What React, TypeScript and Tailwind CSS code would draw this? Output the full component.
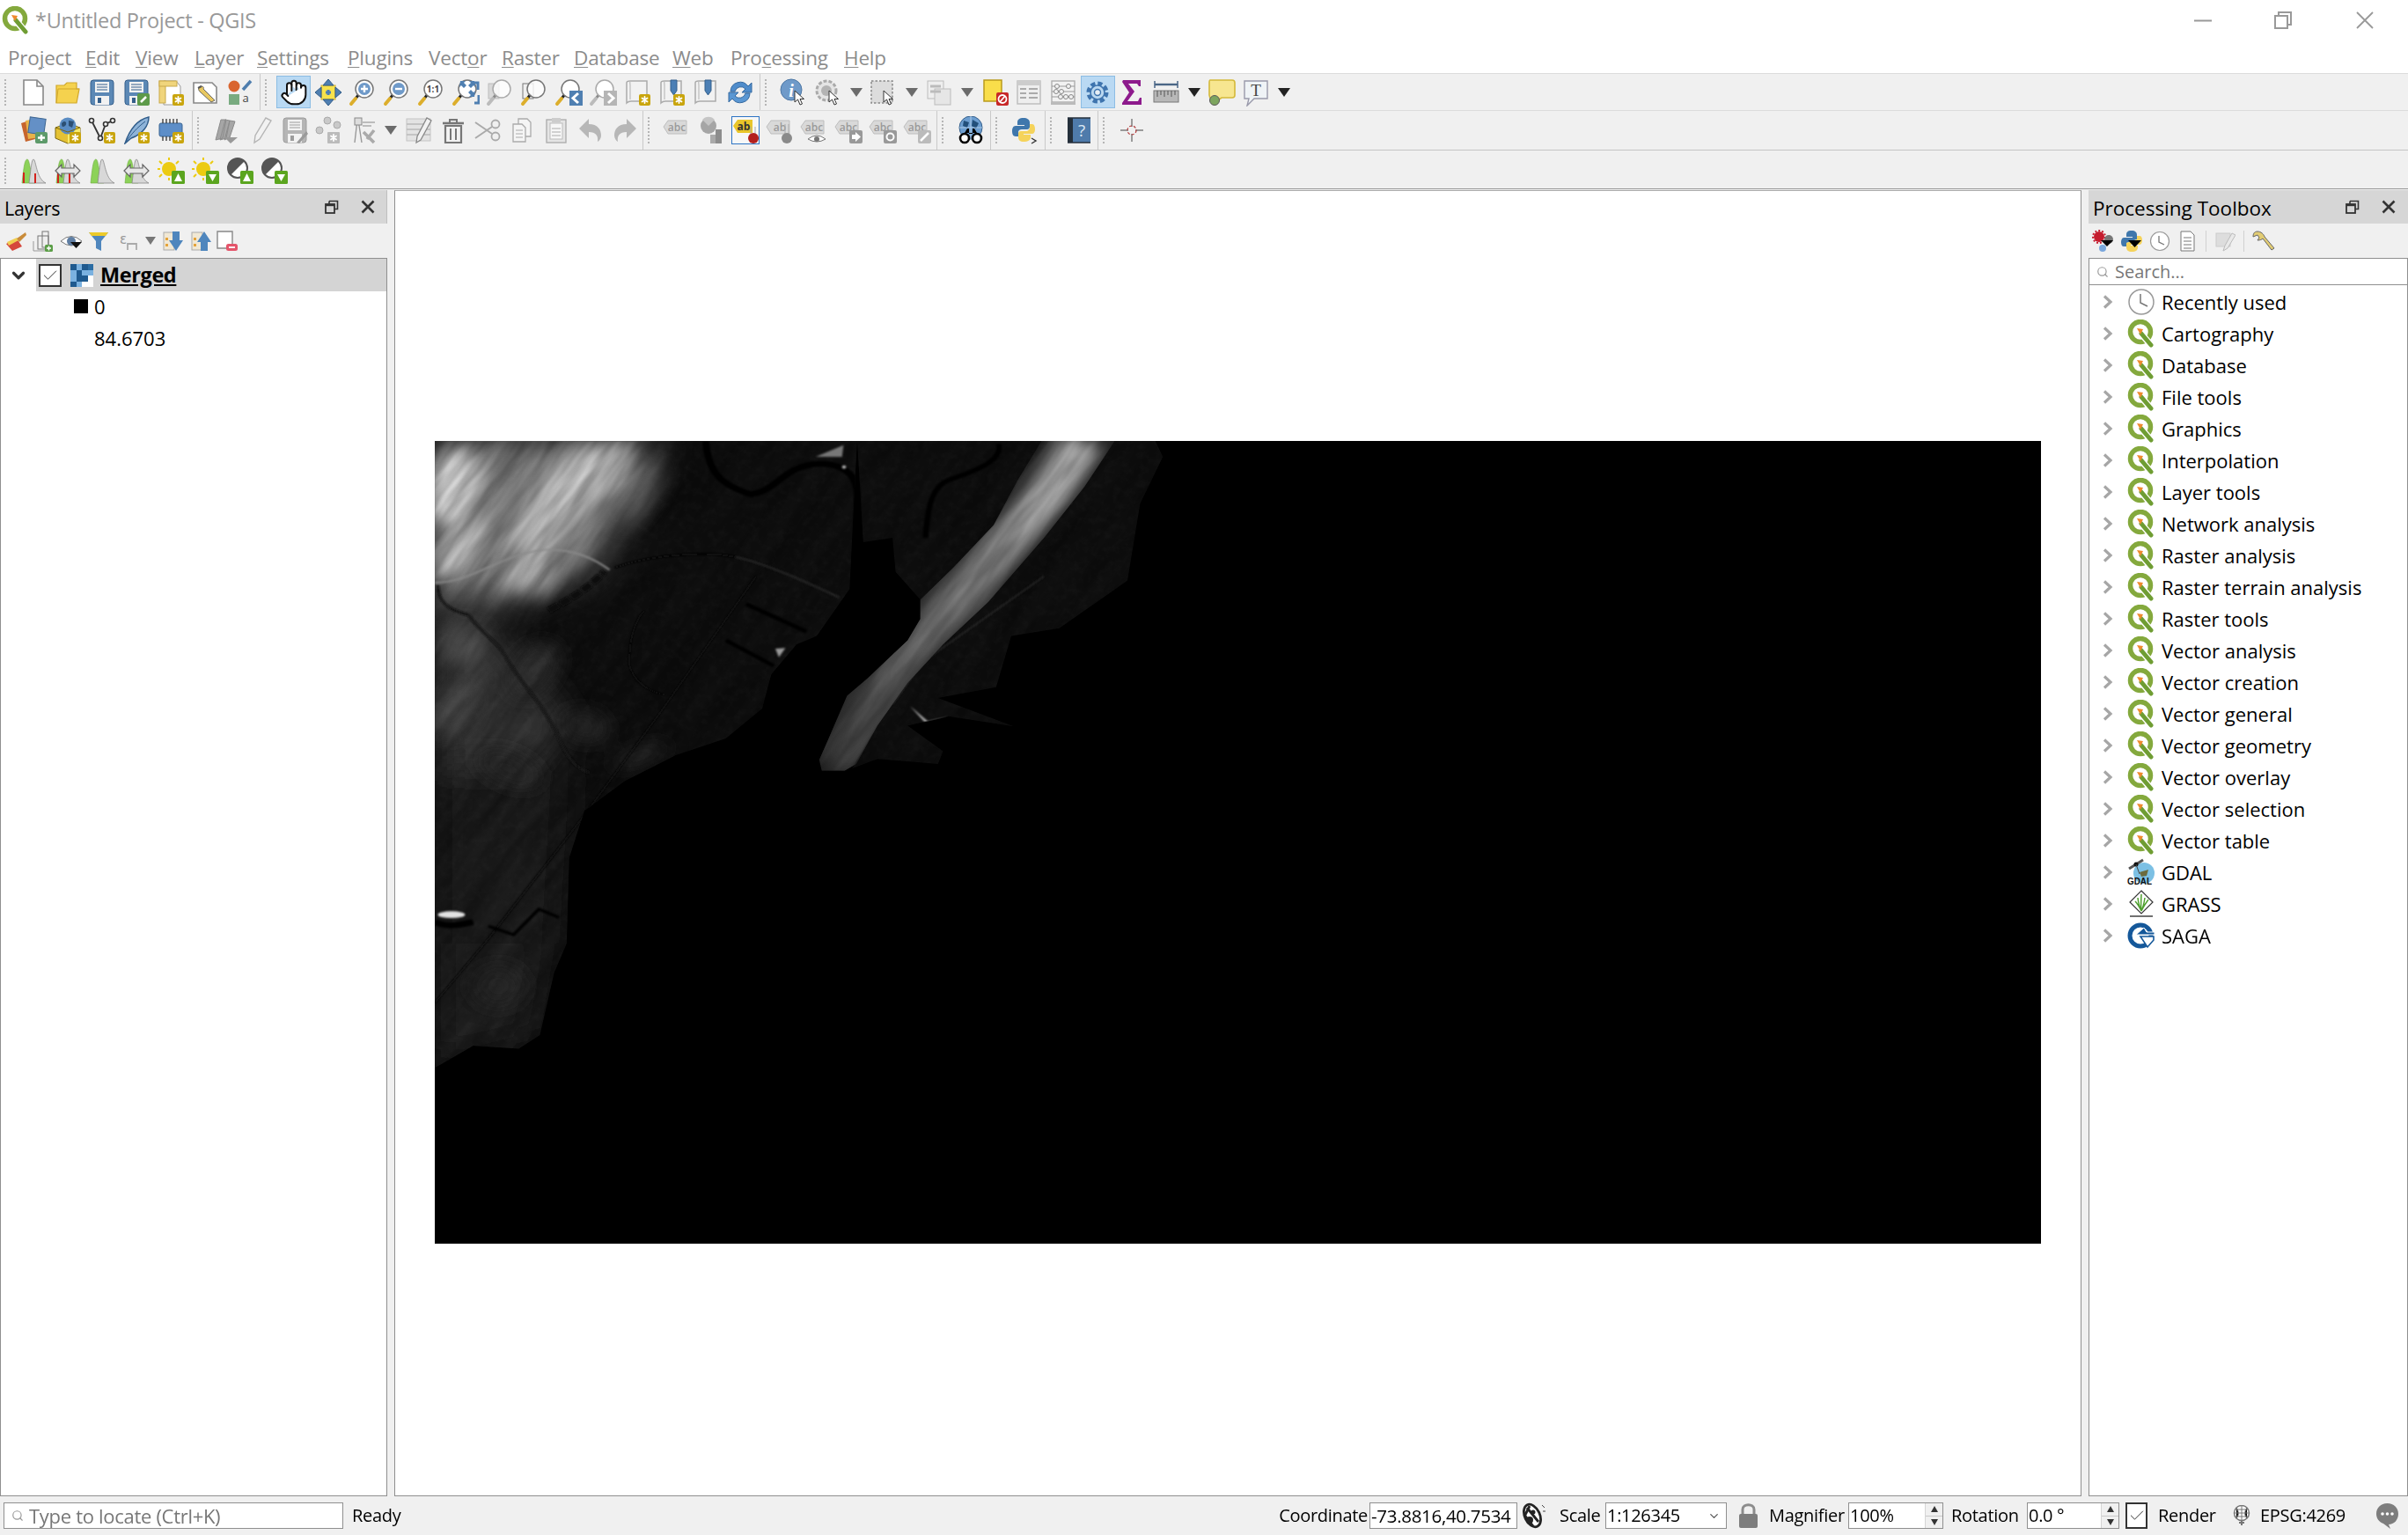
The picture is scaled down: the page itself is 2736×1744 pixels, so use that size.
import React from "react";
import { ChevronDown, Hand, Search, Check } from "lucide-react";

type P = { children?: React.ReactNode; s?: number };
const S = ({ children, s = 32 }: P) => (
  <svg viewBox="0 0 32 32" width={s} height={s} className="block shrink-0">{children}</svg>
);

const Star = ({ x, y, c = "#fff" }: { x: number; y: number; c?: string }) => (
  <g stroke={c} strokeWidth="1.8" strokeLinecap="round">
    <path d={`M${x} ${y - 3.5}V${y + 3.5}M${x - 3} ${y - 2}L${x + 3} ${y + 2}M${x - 3} ${y + 2}L${x + 3} ${y - 2}`} />
  </g>
);
const GoldBadge = () => (
  <g><rect x="18" y="18" width="13" height="13" rx="2" fill="#c9a50d" /><Star x={24.5} y={24.5} /></g>
);
const Cursor = ({ x = 17, y = 14 }: { x?: number; y?: number }) => (
  <path transform={`translate(${x} ${y})`} d="M0 0L0 13L3.5 10L6 16L8.5 15L6 9.5L10.5 9.5Z" fill="#fff" stroke="#333" strokeWidth="1" />
);
const Mag = ({ children, glass = "#fff", dim = false }: P & { glass?: string; dim?: boolean }) => (
  <>
    <path d="M12 18L8 23" stroke={dim ? "#888" : "#222"} strokeWidth="3" />
    <path d="M8 23L3 29" stroke={dim ? "#bbb" : "#dcae2c"} strokeWidth="4" strokeLinecap="round" />
    <circle cx="18" cy="12" r="10" fill={glass} stroke={dim ? "#aaa" : "#777"} strokeWidth="1.5" />
    {children}
  </>
);
const Abc = ({ t = "abc", c = "#9a9a9a", bg = "#d9d9d9" }: { t?: string; c?: string; bg?: string }) => (
  <>
    <path d="M1 12L6 5H27V20H6Z" fill={bg} stroke="#bdbdbd" strokeWidth="1" />
    <text x="16" y="17" textAnchor="middle" fontSize="12" fontFamily="Open Sans, sans-serif" fill={c} fontWeight="600">{t}</text>
  </>
);
const Scroll = ({ pin }: { pin?: boolean }) => (
  <>
    <path d="M4 5C4 3 6 3 8 3H27V26H9C6 26 4 28 4 28Z" fill="#f2f2f2" stroke="#aaa" strokeWidth="1.5" />
    <path d="M9 3C7 3 8 6 8 8V24" fill="none" stroke="#bbb" strokeWidth="1.2" />
    {pin && <path d="M15 2H22V14L18.5 19L15 14Z" fill="#4b7fb5" stroke="#35618c" />}
  </>
);
const Floppy = ({ c = "#5b88b5", d = "#355f8b" }: { c?: string; d?: string }) => (
  <>
    <rect x="3" y="2" width="26" height="28" rx="3" fill={c} stroke={d} strokeWidth="1" />
    <rect x="8" y="4" width="16" height="12" fill="#f2f2f2" />
    <path d="M10 7H22M10 10H22M10 13H22" stroke={d} strokeWidth="1.2" />
    <rect x="8" y="20" width="16" height="10" fill="#f2f2f2" />
    <rect x="11" y="22" width="4" height="6" fill={d} />
  </>
);
const Ring = () => (
  <>
    <circle cx="15" cy="14" r="11.5" fill="none" stroke="#84a93d" strokeWidth="5.5" />
    <path d="M15 15L26 28" stroke="#fff" strokeWidth="7.500" />
    <path d="M16 16L27 29" stroke="#6f9d33" strokeWidth="5" strokeLinecap="round" />
    <path d="M11 10L18 11L15 17Z" fill="#ee8a2e" />
  </>
);
const QLogo = ({ s = 32 }: { s?: number }) => <S s={s}><Ring /></S>;

const Hist = ({ red, arrow }: { red?: boolean; arrow?: boolean }) => (
  <S>
    <path d="M3 30C5 12 6 3 9 3C12 3 12 20 18 30Z" fill="#8cd258" stroke="#6ba93d" strokeWidth=".6" />
    <path d="M11 30C13 14 14 3 16 3C19 3 19 25 30 30Z" fill="#d8d8d8" stroke="#888" strokeWidth=".8" />
    {red && <path d="M5 18V30M18 19V30" stroke="#d3221c" strokeWidth="2" />}
    {arrow && <path d="M2 16L9 9V13H23V9L30 16L23 23V19H9V23Z" fill="#e7e7e7" stroke="#666" strokeWidth="1.2" />}
  </S>
);
const UpDown = ({ down }: { down?: boolean }) => (
  <g>
    <rect x="17" y="16" width="15" height="15" rx="1.5" fill="#5ba51f" />
    <path d={down ? "M20 20H29L24.5 28Z" : "M20 28H29L24.5 19Z"} fill="#fff" />
  </g>
);
const Sun = ({ down }: { down?: boolean }) => (
  <S>
    <circle cx="14" cy="14" r="8" fill="#eccb11" />
    <path d="M14 1V4M14 24V27M1 14H4M3 5L6 8M25 5L22 8M3 23L6 20" stroke="#eccb11" strokeWidth="2" />
    <UpDown down={down} />
  </S>
);
const Contrast = ({ down }: { down?: boolean }) => (
  <S>
    <circle cx="14" cy="13" r="11" fill="#fff" stroke="#555" strokeWidth="2" />
    <path d="M22 5A11 11 0 0 0 6 21Z" fill="#555" />
    <UpDown down={down} />
  </S>
);

const I: Record<string, React.ReactNode> = {
  new: <S><path d="M5 2H20L27 9V30H5Z" fill="#fff" stroke="#888" strokeWidth="1.6" /><path d="M20 2V9H27" fill="none" stroke="#888" strokeWidth="1.6" /></S>,
  open: <S><path d="M3 8H12L15 5H26V12H29L26 28H3Z" fill="#f5d24e" stroke="#d0a72b" strokeWidth="1.2" /><path d="M3 28L5 12H29" fill="none" stroke="#d0a72b" /></S>,
  save: <S><Floppy /></S>,
  saveAs: <S><Floppy /><rect x="17" y="17" width="14" height="14" rx="2" fill="#5d9a4a" /><path d="M21 27L27 21" stroke="#fff" strokeWidth="2.5" /></S>,
  newLayout: <S><path d="M8 3H22L27 9V30H8Z" fill="#fff" stroke="#999" /><rect x="3" y="3" width="7" height="25" fill="#f0d57c" stroke="#c9a94a" /><rect x="3" y="3" width="20" height="6" fill="#f0d57c" stroke="#c9a94a" /><GoldBadge /></S>,
  layoutMgr: <S><path d="M3 5H24L29 10V28H3Z" fill="#fff" stroke="#888" strokeWidth="1.6" /><path d="M11 9C8 10 8 13 10 15L23 27L27 25L14 12C15 10 14 9 11 9Z" fill="#e8c860" stroke="#666" /><path d="M8 11L12 9" stroke="#555" strokeWidth="2" /></S>,
  style: <S><circle cx="10" cy="9" r="6.5" fill="#d9652f" /><path d="M20 13L29 3" stroke="#4f7eae" strokeWidth="3.5" /><rect x="4" y="18" width="12" height="12" fill="#79ab80" /><text x="23" y="27" fontSize="13" textAnchor="middle" fill="#444" fontFamily="Open Sans, sans-serif">a</text></S>,
  hand: <S><Hand size={32} fill="#fff" color="#111" strokeWidth={1.5} /></S>,
  panSel: <S><rect x="8" y="8" width="16" height="16" fill="#f7e24b" stroke="#caa92c" /><path d="M16 1L22 8H10ZM16 31L22 24H10ZM1 16L8 10V22ZM31 16L24 10V22Z" fill="#4f7fb1" stroke="#335d88" /><path d="M13 16H19M16 13V19" stroke="#4f7fb1" strokeWidth="3" /></S>,
  zoomIn: <S><Mag><circle cx="18" cy="12" r="7" fill="#6f9ac9" /><path d="M14 12H22M18 8V16" stroke="#fff" strokeWidth="2.4" /></Mag></S>,
  zoomOut: <S><Mag><circle cx="18" cy="12" r="7" fill="#6f9ac9" /><path d="M14 12H22" stroke="#fff" strokeWidth="2.4" /></Mag></S>,
  zoom1: <S><Mag><text x="18" y="16" textAnchor="middle" fontSize="10" fontWeight="700" fill="#444" fontFamily="Open Sans, sans-serif">1:1</text></Mag></S>,
  zoomFull: <S><Mag><path d="M10 3H16L14 5L17 8L14 11L11 8L9 10ZM26 3H20L22 5L19 8L22 11L25 8L27 10ZM26 21H20L22 19L19 16L22 13L25 16L27 14Z" fill="#4f7fb1" /></Mag><path d="M26 5H30V13M26 28H31V19" stroke="#4f7fb1" strokeWidth="3" fill="none" /></S>,
  zoomSel: <S><rect x="3" y="6" width="12" height="17" fill="#d8d8d8" stroke="#bbb" /><Mag dim glass="#ffffffcc" /></S>,
  zoomLayer: <S><rect x="3" y="6" width="12" height="17" fill="#efefef" stroke="#777" /><Mag glass="#ffffffcc" /></S>,
  zoomLast: <S><Mag /><rect x="17" y="14" width="15" height="17" fill="#4f7fb1" /><path d="M27 17L21 22.5L27 28" fill="none" stroke="#fff" strokeWidth="3" /></S>,
  zoomNext: <S><Mag dim /><rect x="17" y="14" width="15" height="17" fill="#b5b5b5" /><path d="M22 17L28 22.5L22 28" fill="none" stroke="#fff" strokeWidth="3" /></S>,
  bmNew: <S><Scroll /><GoldBadge /></S>,
  bmNew2: <S><Scroll pin /><GoldBadge /></S>,
  bmShow: <S><Scroll pin /></S>,
  refresh: <S><path d="M5 15A11 11 0 0 1 25 9L29 5V16H18L22 12A7 7 0 0 0 10 15Z" fill="#4f8ccb" stroke="#35699f" /><path d="M27 17A11 11 0 0 1 7 23L3 27V16H14L10 20A7 7 0 0 0 22 17Z" fill="#5a97d3" stroke="#35699f" /></S>,
  identify: <S><circle cx="13" cy="13" r="12" fill="#6f9ac9" stroke="#4d77a4" /><text x="13" y="21" textAnchor="middle" fontSize="20" fontStyle="italic" fontWeight="700" fill="#fff" fontFamily="Liberation Serif, serif">i</text><Cursor /></S>,
  action: <S><circle cx="14" cy="14" r="11" fill="#e4e4e4" stroke="#aaa" strokeWidth="3" strokeDasharray="4 2" /><circle cx="14" cy="14" r="6" fill="#b3b3b3" /><Cursor /></S>,
  select: <S><rect x="2" y="3" width="24" height="25" fill="#dcdcdc" stroke="#888" strokeDasharray="2.5 2" strokeWidth="1.5" /><Cursor x={16} y={14} /></S>,
  forms: <S><rect x="3" y="3" width="18" height="20" fill="#eee" stroke="#bbb" /><rect x="11" y="12" width="18" height="18" fill="#e6e6e6" stroke="#bbb" /><path d="M6 9H18M6 15H18" stroke="#bbb" strokeWidth="3" /></S>,
  deselect: <S><rect x="4" y="2" width="20" height="24" fill="#f9de4a" stroke="#b99b1c" strokeWidth="1.5" /><rect x="18" y="16" width="14" height="15" rx="2" fill="#c72828" /><circle cx="25" cy="23.5" r="4.5" fill="none" stroke="#fff" strokeWidth="1.8" /><path d="M22 27L28 20" stroke="#fff" strokeWidth="1.8" /></S>,
  table: <S><rect x="3" y="3" width="26" height="26" fill="#eee" stroke="#bbb" strokeWidth="1.4" /><rect x="3" y="3" width="26" height="5" fill="#ccc" /><path d="M6 12H13M16 12H26M6 17H13M16 17H26M6 22H13M16 22H26" stroke="#aaa" strokeWidth="2" /></S>,
  abacus: <S><rect x="3" y="3" width="26" height="24" fill="#f2f2f2" stroke="#aaa" strokeWidth="1.3" /><path d="M3 9H29M3 15H29M3 21H29" stroke="#999" /><g fill="#f2f2f2" stroke="#888"><circle cx="9" cy="9" r="2.5" /><circle cx="22" cy="9" r="2.5" /><circle cx="8" cy="15" r="2.5" /><circle cx="14" cy="15" r="2.5" /><circle cx="13" cy="21" r="2.5" /><circle cx="19" cy="21" r="2.5" /><circle cx="25" cy="21" r="2.5" /></g><rect x="2" y="27" width="28" height="3" fill="#bbb" /></S>,
  gear: <S><circle cx="16" cy="16" r="10" fill="none" stroke="#3e74ae" strokeWidth="5" strokeDasharray="5 2.85" /><circle cx="16" cy="16" r="8" fill="#bad8f0" stroke="#3e74ae" strokeWidth="1.6" /><circle cx="16" cy="16" r="3.5" fill="#e6eef5" stroke="#3e74ae" strokeWidth="1.4" /></S>,
  sigma: <S><path d="M6 2H26V9H24L22 6H12L19 15L11 26H23L25 22H27V30H5V28L13 16L5 4Z" fill="#8d1a8c" /></S>,
  ruler: <S><path d="M3 7H29" stroke="#4a6686" strokeWidth="2.4" /><path d="M3 3V11M29 3V11" stroke="#4a6686" strokeWidth="1.5" /><rect x="2" y="14" width="28" height="13" fill="#b8b8b8" stroke="#777" /><path d="M6 14V21M10 14V19M14 14V21M18 14V19M22 14V21M26 14V19" stroke="#555" /></S>,
  tip: <S><path d="M3 2H28Q31 2 31 5V19Q31 22 28 22H16L12 25H5Q2 22 2 19V5Q2 2 3 2Z" fill="#f7e690" stroke="#d4b93a" strokeWidth="1.6" /><circle cx="8" cy="25" r="5.5" fill="#7da55f" stroke="#5a5a5a" /></S>,
  text: <S><path d="M3 3H29V23H14L6 31L8 23H3Z" fill="#eff3f6" stroke="#99a" strokeWidth="1.4" /><text x="16" y="20" textAnchor="middle" fontSize="19" fill="#444" fontFamily="Liberation Serif, serif">T</text></S>,
  addLayers: <S><path d="M2 8L14 4L18 26L7 29Z" fill="#c6642c" /><path d="M7 5L19 3L22 24L10 26Z" fill="#e8b34a" /><rect x="11" y="2" width="18" height="18" transform="rotate(8 20 11)" fill="#6490c6" stroke="#3e6691" /><rect x="18" y="18" width="14" height="13" rx="2" fill="#5d9a6a" /><path d="M21 24.5H29M25 21V28" stroke="#fff" strokeWidth="2.4" /></S>,
  newGpkg: <S><path d="M2 13L16 8L30 13V25L16 31L2 25Z" fill="#e5c234" stroke="#7d6810" /><path d="M16 18V31L30 25V13Z" fill="#f7ea6a" /><circle cx="16" cy="11" r="9.5" fill="#5a8cc3" /><path d="M9 8C13 3 16 8 13 11C10 13 9 12 9 8ZM17 5L23 6L21 13L17 11Z" fill="#2c4f73" /><path d="M2 13L16 18L30 13" fill="none" stroke="#7d6810" /><GoldBadge /></S>,
  newVec: <S><path d="M4 5L14 25L20 9L28 5" fill="none" stroke="#333" strokeWidth="1.8" /><g fill="#fff" stroke="#333" strokeWidth="1.6"><circle cx="4" cy="5" r="2.5" /><circle cx="14" cy="25" r="2.5" /><circle cx="20" cy="9" r="2.5" /><circle cx="28" cy="5" r="2.5" /></g><GoldBadge /></S>,
  feather: <S><path d="M3 31C8 16 17 4 30 1C30 10 24 20 10 25Z" fill="#8fb4d9" stroke="#2f5c8a" strokeWidth="1.4" /><path d="M3 31C10 20 18 12 26 6" stroke="#2f5c8a" fill="none" /><GoldBadge /></S>,
  chip: <S><rect x="3" y="8" width="26" height="15" rx="2" fill="#5d8ec8" stroke="#3a6592" /><path d="M7 3V8M11 3V8M15 3V8M19 3V8M23 3V8M7 23V28M11 23V28M15 23V28M19 23V28" stroke="#333" strokeWidth="1.3" /><GoldBadge /></S>,
  pencils: <S><path d="M4 27L10 4L16 4L12 25ZM9 27L15 4L20 5L16 25ZM14 27L20 5L26 6L20 24Z" fill="#a6a6a6" stroke="#8b8b8b" /><path d="M14 24H29L21 31Z" fill="#999" /></S>,
  pencil: <S><path d="M9 30L10 22L22 2L28 5L15 26Z" fill="#f2f2f2" stroke="#b5b5b5" strokeWidth="1.4" /></S>,
  saveGray: <S><Floppy c="#b5b5b5" d="#9c9c9c" /><path d="M18 30L29 17L31 20L21 31Z" fill="#9a9a9a" /></S>,
  points: <S><g fill="#c9c9c9" stroke="#a9a9a9"><circle cx="14" cy="5" r="4" /><circle cx="25" cy="10" r="4" /><circle cx="5" cy="16" r="4" /></g><rect x="14" y="18" width="14" height="13" rx="1" fill="#bbb" /><Star x={21} y={24.5} /></S>,
  tools: <S><path d="M6 30L9 4M14 30L10 4" stroke="#999" strokeWidth="1.4" /><rect x="6" y="2" width="8" height="8" fill="#ddd" stroke="#888" /><path d="M15 7H29M15 11H25" stroke="#aaa" strokeWidth="1.6" /><path d="M16 18L28 30M28 16L20 26" stroke="#aaa" strokeWidth="3.6" /></S>,
  tableEdit: <S><rect x="2" y="3" width="27" height="25" fill="#e3e3e3" stroke="#c4c4c4" /><path d="M2 9H29M2 15H29M2 21H29" stroke="#bbb" strokeWidth="1.4" /><path d="M13 30L14 23L25 2L30 5L18 27Z" fill="#f2f2f2" stroke="#888" strokeWidth="1.3" /></S>,
  trash: <S><path d="M4 8H28" stroke="#777" strokeWidth="2.6" /><path d="M12 7V4H20V7" stroke="#777" strokeWidth="2" fill="none" /><path d="M7 11H25V30H7Z" fill="#f2f2f2" stroke="#777" strokeWidth="2.2" /><path d="M13 14V27M19 14V27" stroke="#777" strokeWidth="2" /></S>,
  scissors: <S><path d="M2 7L21 20M2 25L21 12" stroke="#aaa" strokeWidth="2" /><circle cx="25" cy="9" r="4.5" fill="#f0f0f0" stroke="#aaa" strokeWidth="1.8" /><circle cx="25" cy="23" r="4.5" fill="#f0f0f0" stroke="#aaa" strokeWidth="1.8" /></S>,
  copy: <S><path d="M12 3H22L26 7V23H12Z" fill="#f5f5f5" stroke="#aaa" strokeWidth="1.3" /><path d="M6 9H16L20 13V29H6Z" fill="#f5f5f5" stroke="#aaa" strokeWidth="1.3" /><path d="M9 16H17M9 20H17M9 24H17" stroke="#aaa" /></S>,
  paste: <S><rect x="5" y="4" width="22" height="26" fill="#e5e5e5" stroke="#aaa" strokeWidth="1.3" /><rect x="9" y="8" width="14" height="18" fill="#f7f7f7" stroke="#bbb" /><rect x="11" y="2" width="10" height="5" fill="#ccc" /><path d="M11 14H21M11 18H21M11 22H21" stroke="#aaa" /></S>,
  undo: <S><path d="M3 14L14 3V9C24 9 28 15 28 22C28 25 26 28 24 29C25 22 22 18 14 18V25Z" fill="#b7b7b7" /></S>,
  redo: <S><path d="M29 14L18 3V9C8 9 4 15 4 22C4 25 6 28 8 29C7 22 10 18 18 18V25Z" fill="#b7b7b7" /></S>,
  abc: <S><Abc /></S>,
  diag: <S><circle cx="13" cy="11" r="9" fill="#a5a5a5" /><path d="M13 11L6 4A9 9 0 0 1 20 4Z" fill="#c5c5c5" /><rect x="15" y="21" width="6" height="10" fill="#aaa" /><rect x="21" y="15" width="7" height="16" fill="#8d8d8d" /></S>,
  abPin: <S><rect x="0" y="0" width="32" height="32" fill="#f7f7f7" stroke="#2d74c4" strokeWidth="2" /><path d="M2 11L7 4H24V19H7Z" fill="#e9c62a" /><text x="14" y="16" textAnchor="middle" fontSize="12" fontWeight="700" fill="#333" fontFamily="Open Sans, sans-serif">ab</text><path d="M22 12V22M27 12V22" stroke="#aaa" /><circle cx="25" cy="25" r="6" fill="#b3201e" /></S>,
  abGray: <S><Abc t="ab" /><path d="M22 9V20M26 9V20" stroke="#aaa" /><circle cx="24" cy="25" r="6" fill="#8a8a8a" /></S>,
  abEye: <S><Abc /><path d="M9 26Q19 18 29 26Q19 32 9 26Z" fill="#fff" stroke="#777" /><circle cx="19" cy="26" r="3" fill="#777" /></S>,
  abArrow: <S><Abc /><rect x="17" y="16" width="15" height="15" rx="2" fill="#999" /><path d="M20 21H24V18L30 23.5L24 29V26H20Z" fill="#fff" /></S>,
  abRot: <S><Abc /><rect x="17" y="16" width="15" height="15" rx="2" fill="#999" /><circle cx="24.5" cy="23.5" r="4" fill="none" stroke="#fff" strokeWidth="2" /></S>,
  abPen: <S><Abc /><rect x="17" y="16" width="15" height="15" rx="2" fill="#bbb" /><path d="M20 28L29 19" stroke="#fff" strokeWidth="2.5" /></S>,
  globe: <S><circle cx="16" cy="13" r="13" fill="#6d9ed0" stroke="#35608c" /><path d="M8 5L14 7L12 13L7 11ZM18 4L25 8L22 14L17 11Z" fill="#224f7a" /><path d="M3 13H29M16 0V26" stroke="#c8dcf0" strokeWidth=".7" /><path d="M9 19L12 14H14V20H18V14H20L23 19Z" fill="#000" /><circle cx="9" cy="25" r="5" fill="#fff" stroke="#000" strokeWidth="2.6" /><circle cx="23" cy="25" r="5" fill="#fff" stroke="#000" strokeWidth="2.6" /></S>,
  python: <S><path d="M15 2C10 2 8 4 8 7V10H16V11H6C3 11 2 14 2 17C2 20 3 23 6 23H9V18C9 16 11 15 13 15H19C21 15 22 13 22 12V7C22 4 19 2 15 2Z" fill="#3f77ac" /><path d="M15 29C20 29 23 27 23 24V21H15V20H25C27 20 28 17 28 15C28 12 27 9 25 9H22V13C22 15 20 17 18 17H12C10 17 9 18 9 20V24C9 27 11 29 15 29Z" fill="#f5d35b" /><path d="M24 25L29 28L24 31" stroke="#333" fill="none" strokeWidth="1.4" /></S>,
  help: <S><rect x="3" y="2" width="26" height="28" rx="1" fill="#4f7bab" /><rect x="3" y="2" width="6" height="28" fill="#242f3b" /><path d="M3 2H29M3 30H29" stroke="#242f3b" strokeWidth="1.5" /><text x="19" y="23" textAnchor="middle" fontSize="19" fill="#dce8f4" fontFamily="Open Sans, sans-serif">?</text></S>,
  cross: <S><path d="M16 3V12M16 20V29M3 16H12M20 16H29" stroke="#444" strokeWidth="1" /><circle cx="16" cy="16" r="5" fill="none" stroke="#b53b3b" strokeWidth="1.2" strokeDasharray="3 2" /></S>,
};

const T: Record<string, React.ReactNode> = {
  style: <svg viewBox="0 0 24 24" width="24" height="24" className="block"><path d="M1 15L13 9L19 18L8 23Z" fill="#d5473c" /><path d="M2 13L13 8L15 11L4 17Z" fill="#f0cf52" /><path d="M13 9L23 2L24 5L16 13Z" fill="#c98c3a" /></svg>,
  group: <svg viewBox="0 0 24 24" width="24" height="24" className="block"><path d="M1 12V23H14" fill="none" stroke="#999" /><rect x="6" y="6" width="12" height="15" fill="#eee" stroke="#777" /><rect x="11" y="1" width="7" height="18" fill="none" stroke="#777" /><rect x="14" y="16" width="9" height="8" rx="1.5" fill="#5b9e47" /><path d="M16 20H21M18.500 17.500V22.500" stroke="#fff" strokeWidth="1.5" /></svg>,
  eye: <svg viewBox="0 0 24 24" width="24" height="24" className="block"><path d="M0 12Q12 1 24 12Q12 22 0 12Z" fill="#fff" stroke="#777" /><circle cx="12" cy="12" r="5" fill="#5f7ea3" /><path d="M11 13H24L17.500 20Z" fill="#111" /></svg>,
  filter: <svg viewBox="0 0 24 24" width="24" height="24" className="block"><path d="M1 2H23L15 12V23L9 20V12Z" fill="#4f86bd" /><path d="M1 2H23L20 6H4Z" fill="#ecca2a" /></svg>,
  epsilon: <svg viewBox="0 0 24 24" width="24" height="24" className="block"><text x="8" y="15" textAnchor="middle" fontSize="15" fill="#999" fontFamily="DejaVu Sans, sans-serif">ε</text><path d="M13 22V15H23V22" fill="none" stroke="#aaa" strokeWidth="1.8" /></svg>,
  expand: <svg viewBox="0 0 24 24" width="24" height="24" className="block"><rect x="1" y="2" width="12" height="20" fill="#f1e8d4" stroke="#aaa" /><rect x="3" y="8" width="3" height="3" fill="#e5a33a" /><rect x="3" y="15" width="3" height="3" fill="#e5a33a" /><path d="M11 1H19V11H23L15 23L7 11H11Z" fill="#4f86bd" /></svg>,
  collapse: <svg viewBox="0 0 24 24" width="24" height="24" className="block"><rect x="1" y="2" width="12" height="20" fill="#f1e8d4" stroke="#aaa" /><rect x="3" y="8" width="3" height="3" fill="#e5a33a" /><rect x="3" y="15" width="3" height="3" fill="#e5a33a" /><path d="M11 23H19V13H23L15 1L7 13H11Z" fill="#4f86bd" /></svg>,
  remove: <svg viewBox="0 0 24 24" width="24" height="24" className="block"><path d="M1 1H18V20H1Z" fill="#fff" stroke="#888" strokeWidth="1.4" /><rect x="11" y="15" width="13" height="8" rx="2.500" fill="#e4556b" /><path d="M14 19H21" stroke="#fff" strokeWidth="1.8" /></svg>,
  models: <svg viewBox="0 0 26 26" width="26" height="26" className="block"><circle cx="8" cy="8" r="6" fill="#c51c2e" /><circle cx="8" cy="8" r="7" fill="none" stroke="#c51c2e" strokeWidth="2" strokeDasharray="2 2" /><circle cx="19" cy="11" r="5" fill="#777" /><circle cx="12" cy="21" r="4" fill="#7aa7dc" /><path d="M10 12H24L17 19Z" fill="#000" /></svg>,
  py: <svg viewBox="0 0 26 26" width="26" height="26" className="block"><path d="M13 1C8 1 7 3 7 6V8H14V9H4C2 9 1 12 1 14C1 17 2 19 4 19H7V15L19 11V6C19 3 17 1 13 1Z" fill="#3f77ac" /><path d="M13 25C18 25 20 23 20 20V18H12V17H22C24 17 25 14 25 12C25 9 24 7 22 7H19V11L7 15V20C7 23 9 25 13 25Z" fill="#f5d35b" /><path d="M9 12H24L16.500 20Z" fill="#000" /></svg>,
  clock: <svg viewBox="0 0 24 24" width="24" height="24" className="block"><circle cx="12" cy="12" r="10.500" fill="#fff" stroke="#999" strokeWidth="1.2" /><path d="M11 6V13L17 16" fill="none" stroke="#777" strokeWidth="1.3" /></svg>,
  log: <svg viewBox="0 0 24 24" width="24" height="24" className="block"><path d="M5 1H16L20 5V23H5Z" fill="#fff" stroke="#777" /><path d="M8 8H17M8 12H17M8 16H17M8 20H17" stroke="#777" /></svg>,
  edit: <svg viewBox="0 0 24 24" width="24" height="24" className="block"><rect x="2" y="3" width="16" height="15" fill="#ddd" stroke="#ccc" /><path d="M10 23L12 17L20 3L24 5L15 20Z" fill="#e9e9e9" stroke="#bbb" /></svg>,
  wrench: <svg viewBox="0 0 26 26" width="26" height="26" className="block"><path d="M6 2C2 2 1 5 1 8L6 6L8 9L6 12C9 12 11 11 12 10L22 23L25 21L14 8C13 5 10 2 6 2Z" fill="#e2cc73" stroke="#666" /></svg>,
};

const Btn = ({ k, active }: { k: string; active?: boolean }) => (
  <div className="w-[39px] h-full flex items-center justify-center shrink-0">
    <div className={active ? "w-[39px] h-[37px] flex items-center justify-center bg-[#b9d9f3] border border-[#8cbde4]" : "flex items-center justify-center"}>{I[k]}</div>
  </div>
);
const Caret = ({ dark }: { dark?: boolean }) => (
  <div className="w-[24px] h-full flex items-center justify-center shrink-0">
    <div className={dark ? "w-0 h-0 border-x-[7px] border-x-transparent border-t-[10px] border-t-[#222]" : "w-0 h-0 border-x-[7px] border-x-transparent border-t-[10px] border-t-[#6b6b6b]"} />
  </div>
);
const Handle = () => (
  <div className="w-[18.5px] h-full flex items-center justify-start pl-[5px] shrink-0">
    <div className="h-[30px] w-[2px] border-l-2 border-dotted border-[#b5b5b5]" />
  </div>
);
const Group = ({ children, last, pr = "pr-[4px]" }: { children: React.ReactNode; last?: boolean; pr?: string }) => (
  <div className={`flex items-center h-full ${last ? "" : "border-r border-[#c9c9c9]"} ${pr}`}>
    <Handle />
    {children}
  </div>
);
const Bs = ({ keys }: { keys: string[] }) => <>{keys.map((k, i) => <Btn key={i} k={k} />)}</>;

const menus = [
  { a: "Pro", u: "j", b: "ect", w: "w-[88px]" },
  { a: "", u: "E", b: "dit", w: "w-[57px]" },
  { a: "", u: "V", b: "iew", w: "w-[67px]" },
  { a: "", u: "L", b: "ayer", w: "w-[71px]" },
  { a: "", u: "S", b: "ettings", w: "w-[103px]" },
  { a: "", u: "P", b: "lugins", w: "w-[92px]" },
  { a: "Vect", u: "o", b: "r", w: "w-[83px]" },
  { a: "", u: "R", b: "aster", w: "w-[82px]" },
  { a: "", u: "D", b: "atabase", w: "w-[112px]" },
  { a: "", u: "W", b: "eb", w: "w-[66px]" },
  { a: "Pro", u: "c", b: "essing", w: "w-[129px]" },
  { a: "", u: "H", b: "elp", w: "w-[60px]" },
];

const tree: { n: string; i: "clock" | "q" | "gdal" | "grass" | "saga" }[] = [
  { n: "Recently used", i: "clock" },
  ...["Cartography", "Database", "File tools", "Graphics", "Interpolation", "Layer tools", "Network analysis", "Raster analysis", "Raster terrain analysis", "Raster tools", "Vector analysis", "Vector creation", "Vector general", "Vector geometry", "Vector overlay", "Vector selection", "Vector table"].map((n) => ({ n, i: "q" as const })),
  { n: "GDAL", i: "gdal" },
  { n: "GRASS", i: "grass" },
  { n: "SAGA", i: "saga" },
];

const TreeIcon = ({ i }: { i: string }) => {
  if (i === "clock") return <S><circle cx="16" cy="16" r="14" fill="#fff" stroke="#999" strokeWidth="1.5" /><path d="M15 7V17L23 21" fill="none" stroke="#777" strokeWidth="1.5" /></S>;
  if (i === "q") return <QLogo />;
  if (i === "gdal") return (
    <S>
      <circle cx="19" cy="17" r="12" fill="#7cc0e4" />
      <path d="M14 16L24 13L22 20L16 21Z" fill="#6b6b3f" />
      <path d="M2 12L18 2" stroke="#555" strokeWidth="3" />
      <circle cx="10" cy="7" r="2.500" fill="#111" />
      <path d="M10 7L14 18" stroke="#444" />
      <text x="14" y="30" textAnchor="middle" fontSize="11" fontWeight="800" fill="#111" fontFamily="Liberation Sans Narrow, Liberation Sans, sans-serif" textLength="28" lengthAdjust="spacingAndGlyphs">GDAL</text>
    </S>
  );
  if (i === "grass") return (
    <S>
      <path d="M16 1L29 14L16 27L3 14Z" fill="#fff" stroke="#333" strokeWidth="1.2" />
      <path d="M16 24C15 16 16 10 16 5M16 24C13 18 11 15 9 13M16 24C19 18 21 15 24 11M16 24C14 20 13 18 12 9M16 24C18 20 19 16 20 9" stroke="#4fa02f" strokeWidth="1.5" fill="none" />
      <path d="M3 30H29" stroke="#333" strokeWidth="1.4" />
    </S>
  );
  return (
    <S>
      <circle cx="15" cy="16" r="12" fill="none" stroke="#15589a" strokeWidth="5" />
      <path d="M10 15L19 7L22 12H31V15H18Z" fill="#15589a" stroke="#fff" strokeWidth="1" />
      <path d="M15 17H30V21L23 29Z" fill="#fff" stroke="#15589a" strokeWidth="1.600" />
    </S>
  );
};

const DockBtns = () => (
  <div className="flex items-center">
    <svg viewBox="0 0 16 16" width="16" height="16" className="block"><path d="M5 1.500H14.500V10.500H11" fill="none" stroke="#333" strokeWidth="1.600" /><path d="M5 1.500V5" stroke="#333" strokeWidth="1.600" /><rect x="1" y="5" width="10" height="10" fill="none" stroke="#333" strokeWidth="1.800" /><path d="M1 6H11" stroke="#333" strokeWidth="2.400" /></svg>
    <svg viewBox="0 0 16 16" width="16" height="16" className="block ml-[25px]"><path d="M1.500 1.500L14.500 14.500M14.500 1.500L1.500 14.500" stroke="#333" strokeWidth="2.600" /></svg>
  </div>
);

const blobs: [number, number, number, number, number, string][] = [
  [60, 130, 42, 90, 10, "#f4f4f4"],
  [70, 270, 40, 80, 25, "#c4c4c4"],
  [125, 130, 22, 100, 25, "#727272"],
  [270, 170, 50, 150, 28, "#d0d0d0"],
  [370, 90, 32, 70, 25, "#d4d4d4"],
  [210, 335, 50, 45, 25, "#b0b0b0"],
  [430, 150, 18, 80, 28, "#7a7a7a"],
  [80, 500, 46, 50, 20, "#5c5c5c"],
  [60, 650, 40, 70, 20, "#4c4c4c"],
  [220, 560, 40, 70, 25, "#343434"],
  [320, 690, 46, 36, 30, "#2e2e2e"],
  [170, 790, 70, 36, 30, "#2a2a2a"],
  [430, 760, 60, 14, -25, "#333"],
  [150, 1300, 50, 50, 20, "#2c2c2c"],
];

const zones: [string, string][] = [
  ["M24 23H470L330 330L200 390L24 400Z", "#8f8f8f"],
  ["M24 430L140 450L300 700L220 790L24 790Z", "#383838"],
  ["M24 800H290L270 1200H24Z", "#1e1e1e"],
  ["M24 1200H250L220 1420L24 1480Z", "#222"],
];

const Raster = () => (
  <svg viewBox="24 23 3179 1881" preserveAspectRatio="none" width="1825" height="912" className="block">
    <defs>
      <linearGradient id="ridge" gradientUnits="userSpaceOnUse" x1="1310" y1="23" x2="820" y2="780">
        <stop offset="0" stopColor="#d2d2d2" />
        <stop offset="0.25" stopColor="#a4a4a4" />
        <stop offset="0.5" stopColor="#888" />
        <stop offset="0.7" stopColor="#606060" />
        <stop offset="1" stopColor="#4a4a4a" />
      </linearGradient>
      <filter id="b1" x="-50%" y="-50%" width="200%" height="200%"><feGaussianBlur stdDeviation="20" /></filter>
      <filter id="b3" x="-50%" y="-50%" width="200%" height="200%"><feGaussianBlur stdDeviation="38" /></filter>
      <filter id="b2" x="-20%" y="-20%" width="140%" height="140%"><feGaussianBlur stdDeviation="1.800" /></filter>
      <filter id="n1" x="0" y="0" width="100%" height="100%">
        <feTurbulence type="fractalNoise" baseFrequency="0.005 0.03" numOctaves="3" seed="7" />
        <feColorMatrix values="0 0 0 0 0  0 0 0 0 0  0 0 0 0 0  2.200 0 0 0 -0.600" />
      </filter>
      <filter id="n2" x="0" y="0" width="100%" height="100%">
        <feTurbulence type="fractalNoise" baseFrequency="0.06" numOctaves="3" seed="3" />
        <feColorMatrix values="0 0 0 0 0.500  0 0 0 0 0.500  0 0 0 0 0.500  1.200 0 0 0 -0.500" />
      </filter>
      <clipPath id="land">
        <path d="M24 23H860L850 250L845 370L780 480L740 500L690 570L672 650L600 720L500 760L400 820L320 890L290 1000L285 1200L260 1270L232 1415L190 1447L100 1440L24 1492Z" />
        <path d="M860 23H1240L1190 100L1130 220L1050 320L985 395L936 330L930 250L872 260Z" />
        <path d="M1370 23H1450L1465 60L1420 170L1395 350L1260 462L1165 480L1135 600L1020 625L1170 692L1040 668L960 690L1030 750L1020 780L900 768L850 790L900 690L960 590L1030 500L1120 400L1230 250L1270 190L1310 130Z" />
      </clipPath>
      <clipPath id="mht">
        <path d="M1225 23H1370L1310 130L1270 190L1230 250L1120 400L1030 500L960 590L900 690L858 780L835 796L790 796L785 770L800 730L840 620L880 580L960 490L985 440L985 395L1050 320L1130 220L1180 110Z" />
      </clipPath>
    </defs>
    <rect x="24" y="23" width="3179" height="1881" fill="#000" />
    <g clipPath="url(#land)">
      <rect x="24" y="23" width="1500" height="1500" fill="#0f0f0f" />
      <g filter="url(#b3)">
        {zones.map(([d, c], i) => <path key={i} d={d} fill={c} />)}
      </g>
      <g filter="url(#b1)">
        {blobs.map(([cx, cy, rx, ry, r, c], i) => (
          <ellipse key={i} cx={cx} cy={cy} rx={rx} ry={ry} fill={c} transform={`rotate(${r} ${cx} ${cy})`} />
        ))}
      </g>
    </g>
    <g clipPath="url(#mht)">
      <rect x="700" y="23" width="700" height="800" fill="#222" />
      <path d="M1310 23L1235 150L1110 320L1010 460L900 620L820 785" fill="none" stroke="url(#ridge)" strokeWidth="80" filter="url(#b1)" />
      <g transform="rotate(-58 1050 400)">
        <rect x="500" y="-100" width="1100" height="1000" filter="url(#n1)" opacity="0.28" />
      </g>
    </g>
    <g clipPath="url(#land)">
      <g transform="rotate(-58 700 700)">
        <rect x="-500" y="-500" width="2500" height="2500" filter="url(#n1)" opacity="0.3" />
      </g>
      <rect x="24" y="23" width="1500" height="1500" filter="url(#n2)" opacity="0.05" />
      <g filter="url(#b2)" fill="none">
        <path d="M560 23C565 90 585 125 650 148C700 140 710 90 770 78C810 72 860 85 860 150V260" stroke="#000" strokeWidth="14" />
        <path d="M1140 30C1150 70 1090 95 1040 115C1010 130 1000 170 995 250" stroke="#000" strokeWidth="11" />
        <path d="M640 405L760 470M600 490L695 550" stroke="#000" strokeWidth="9" />
        <path d="M250 420C290 395 320 375 360 330" stroke="#0a0a0a" strokeWidth="15" strokeDasharray="22 5" />
        <path d="M30 360C30 400 50 420 90 430C120 480 150 490 170 540C200 600 240 640 270 720C285 760 300 790 330 800" stroke="#141414" strokeWidth="6" />
        <path d="M24 355C100 355 150 290 240 278C300 275 340 300 370 325" stroke="#8a8a8a" strokeWidth="4" />
        <path d="M380 320C450 290 560 280 620 295" stroke="#080808" strokeWidth="5" />
        <path d="M620 295C680 310 770 360 825 390" stroke="#2a2a2a" strokeWidth="4" />
        <path d="M660 340L470 660L320 900L130 1190L24 1340" stroke="#090909" strokeWidth="4" />
        <path d="M410 520C400 570 440 610 480 618M440 420C420 440 410 490 410 520" stroke="#090909" strokeWidth="4" />
        <path d="M1230 340L990 540L930 640" stroke="#2c2c2c" strokeWidth="3" />
        <path d="M1200 85L1285 170" stroke="#333" strokeWidth="3" strokeDasharray="14 9" />
        <path d="M24 1150C50 1165 80 1155 100 1150" stroke="#000" strokeWidth="14" />
        <path d="M130 1160L180 1180L230 1120L270 1140" stroke="#050505" strokeWidth="7" />
      </g>
      <g filter="url(#b2)">
        <path d="M778 60L833 33L830 60Z" fill="#777" />
        <path d="M965 645L1000 680L1040 670L1000 690Z" fill="#aaa" />
        <path d="M698 510L718 508L705 530Z" fill="#999" />
        <circle cx="834" cy="84" r="4" fill="#bbb" />
        <ellipse cx="57" cy="1133" rx="27" ry="8" fill="#e2e2e2" />
      </g>
    </g>
    <g filter="url(#b1)">
      <ellipse cx="3100" cy="960" rx="50" ry="50" fill="#040404" />
      <ellipse cx="3160" cy="1090" rx="36" ry="60" fill="#040404" />
    </g>
  </svg>
);

const Field = ({ children, w, extra }: { children: React.ReactNode; w: string; extra?: React.ReactNode }) => (
  <div className={`${w} h-[30px] bg-white border border-[#8f8f8f] flex items-center pl-[1px] shrink-0 overflow-hidden`}>
    <span className="flex-1 whitespace-nowrap">{children}</span>
    {extra}
  </div>
);
const Spin = () => (
  <div className="w-[20px] h-full flex flex-col border-l border-[#d5d5d5] bg-[#f0f0f0] shrink-0">
    <div className="flex-1 flex items-center justify-center border-b border-[#c8c8c8]"><div className="w-0 h-0 border-x-[4px] border-x-transparent border-b-[7px] border-b-[#333]" /></div>
    <div className="flex-1 flex items-center justify-center"><div className="w-0 h-0 border-x-[4px] border-x-transparent border-t-[7px] border-t-[#333]" /></div>
  </div>
);

export default function App() {
  return (
    <div className="w-[2736px] h-[1744px] overflow-hidden flex flex-col bg-[#f0f0f0] text-[22px] text-black font-['Open_Sans',sans-serif]">
      {/* Title bar */}
      <div className="h-[46px] bg-white flex items-center shrink-0">
        <div className="ml-[2px]"><QLogo /></div>
        <span className="ml-[6px] pt-[1px] text-[#999] text-[23.5px] tracking-[-0.3px]">*Untitled Project - QGIS</span>
        <div className="ml-auto flex items-center">
          <svg viewBox="0 0 20 20" width="20" height="20" className="block"><path d="M0 10.500H20" stroke="#999" strokeWidth="2" /></svg>
          <svg viewBox="0 0 20 20" width="20" height="20" className="block ml-[71px]"><rect x="1" y="5" width="14" height="14" fill="none" stroke="#999" strokeWidth="2" /><path d="M5 5V1H19V15H15" fill="none" stroke="#999" strokeWidth="2" /></svg>
          <svg viewBox="0 0 20 20" width="20" height="20" className="block ml-[73px] mr-[39px]"><path d="M1 1L19 19M19 1L1 19" stroke="#999" strokeWidth="1.800" /></svg>
        </div>
      </div>
      {/* Menu bar */}
      <div className="h-[37px] bg-white flex items-center pl-[9px] pt-[2px] shrink-0 text-[#8c8c8c] text-[22.5px] tracking-[-0.2px]">
        {menus.map((m, i) => (
          <span key={i} className={`${m.w} whitespace-nowrap shrink-0`}>{m.a}<span className="underline underline-offset-2 decoration-1">{m.u}</span>{m.b}</span>
        ))}
      </div>
      {/* Toolbars */}
      <div className="h-[43px] flex items-center border-t border-b border-[#dcdcdc] shrink-0">
        <Group pr="pr-[3px]"><Bs keys={["new", "open", "save", "saveAs", "newLayout", "layoutMgr", "style"]} /></Group>
        <Group pr="pr-[3px]">
          <Btn k="hand" active />
          <Bs keys={["panSel", "zoomIn", "zoomOut", "zoom1", "zoomFull", "zoomSel", "zoomLayer", "zoomLast", "zoomNext", "bmNew", "bmNew2", "bmShow", "refresh"]} />
        </Group>
        <Group last>
          <Btn k="identify" /><Btn k="action" /><Caret /><Btn k="select" /><Caret /><Btn k="forms" /><Caret />
          <Btn k="deselect" /><Btn k="table" /><Btn k="abacus" /><Btn k="gear" active /><Btn k="sigma" /><Btn k="ruler" /><Caret dark /><Btn k="tip" /><Btn k="text" /><Caret dark />
        </Group>
      </div>
      <div className="h-[45px] flex items-center border-b border-[#c4c4c4] shrink-0">
        <Group><Bs keys={["addLayers", "newGpkg", "newVec", "feather", "chip"]} /></Group>
        <Group pr="pr-[1px]">
          <Bs keys={["pencils", "pencil", "saveGray", "points", "tools"]} /><Caret />
          <Bs keys={["tableEdit", "trash", "scissors", "copy", "paste", "undo", "redo"]} />
        </Group>
        <Group pr="pr-[2px]"><Bs keys={["abc", "diag", "abPin", "abGray", "abEye", "abArrow", "abRot", "abPen"]} /></Group>
        <Group pr="pr-[3px]"><Btn k="globe" /></Group>
        <Group pr="pr-[3px]"><Btn k="python" /></Group>
        <Group pr="pr-[2px]"><Btn k="help" /></Group>
        <Group last><Btn k="cross" /></Group>
      </div>
      <div className="h-[44px] flex items-center pt-[3px] border-b border-[#9a9a9a] shrink-0">
        <Handle />
        <div className="w-[39px] flex justify-center"><Hist red /></div>
        <div className="w-[39px] flex justify-center"><Hist red arrow /></div>
        <div className="w-[39px] flex justify-center"><Hist /></div>
        <div className="w-[39px] flex justify-center"><Hist arrow /></div>
        <div className="w-[39px] flex justify-center"><Sun /></div>
        <div className="w-[39px] flex justify-center"><Sun down /></div>
        <div className="w-[39px] flex justify-center"><Contrast /></div>
        <div className="w-[39px] flex justify-center"><Contrast down /></div>
      </div>

      {/* Main */}
      <div className="flex-1 min-h-0 flex pt-[1px]">
        {/* Layers */}
        <div className="w-[440px] shrink-0 flex flex-col">
          <div className="h-[38px] bg-[#d6d6d6] flex items-center justify-between pl-[5px] pr-[13px] border-r border-[#bfbfbf] shrink-0">
            <span className="text-[21.5px] tracking-[-0.3px] pt-[4px]">Layers</span>
            <DockBtns />
          </div>
          <div className="h-[39px] flex items-center pl-[2px] shrink-0">
            {["style", "group", "eye", "filter", "epsilon"].map((k) => <div key={k} className="w-[31.5px] flex justify-center">{T[k]}</div>)}
            <div className="w-[22px] flex justify-center"><div className="w-0 h-0 border-x-[6px] border-x-transparent border-t-[9px] border-t-[#777]" /></div>
            <div className="w-[31.5px] flex justify-center">{T.expand}</div>
            <div className="w-[31px] flex justify-center">{T.collapse}</div>
            <div className="w-[28px] flex justify-center">{T.remove}</div>
          </div>
          <div className="flex-1 bg-white border-x border-t border-b border-[#8f8f8f]">
            <div className="flex h-[37px] items-center">
              <div className="w-[40px] flex justify-center"><ChevronDown size={22} strokeWidth={3.5} color="#333" /></div>
              <div className="flex-1 h-full bg-[#d4d4d4] flex items-center">
                <div className="ml-[3px] w-[26px] h-[26px] border-2 border-[#333] bg-white flex items-center justify-center"><Check size={20} strokeWidth={1.2} color="#333" /></div>
                <svg viewBox="0 0 4 4" width="26" height="26" className="block ml-[10px]" shapeRendering="crispEdges">
                  <rect width="4" height="4" fill="#7ab1e0" /><rect width="1" height="1" fill="#1f5a8f" /><rect x="2" width="1" height="1" fill="#1f5a8f" /><rect x="3" y="0" width="1" height="1" fill="#2b6ca3" /><rect x="1" y="1" width="1" height="1" fill="#1f5a8f" /><rect x="2" y="2" width="1" height="1" fill="#1f5a8f" /><rect x="1" y="2" width="1" height="1" fill="#1f5a8f" /><rect y="3" width="1" height="1" fill="#1f5a8f" /><rect x="2" y="3" width="2" height="1" fill="#fff" /><rect x="3" y="2" width="1" height="1" fill="#fff" />
                </svg>
                <span className="ml-[8px] font-bold underline tracking-[-0.4px] text-[23.5px]">Merged</span>
              </div>
            </div>
            <div className="flex h-[36px] items-center pl-[83px] -mt-[1px]">
              <div className="w-[16px] h-[16px] bg-black" /><span className="ml-[7px]">0</span>
            </div>
            <div className="flex h-[36px] items-center pl-[106px]">84.6703</div>
          </div>
        </div>

        {/* Canvas */}
        <div className="flex-1 min-w-0 mx-[8px] bg-white border border-[#8f8f8f] border-t-[#aaa] flex items-start justify-center pt-[284px]">
          <Raster />
        </div>

        {/* Toolbox */}
        <div className="w-[363px] shrink-0 flex flex-col">
          <div className="h-[38px] bg-[#d6d6d6] flex items-center justify-between pl-[5px] pr-[14px] shrink-0">
            <span className="text-[22.5px] pt-[3px]">Processing Toolbox</span>
            <DockBtns />
          </div>
          <div className="h-[39px] flex items-center pl-[4px] shrink-0">
            <div className="w-[26px]">{T.models}</div>
            <div className="w-[26px] ml-[6px]">{T.py}</div>
            <div className="w-[24px] ml-[7px]">{T.clock}</div>
            <div className="w-[24px] ml-[7px]">{T.log}</div>
            <div className="w-[1px] h-[24px] bg-[#d0d0d0] ml-[9px]" />
            <div className="w-[24px] ml-[9px]">{T.edit}</div>
            <div className="w-[1px] h-[24px] bg-[#d0d0d0] ml-[9px]" />
            <div className="w-[26px] ml-[9px]">{T.wrench}</div>
          </div>
          <div className="flex-1 flex flex-col bg-white border-l border-r border-b border-[#8f8f8f]">
            <div className="h-[31px] flex items-center border-t border-b border-[#8f8f8f] pl-[8px] shrink-0 text-[#777] text-[20px]">
              <Search size={14} color="#999" />
              <span className="ml-[7px]">Search...</span>
            </div>
            <div className="pt-[1px]">
              {tree.map((t) => (
                <div key={t.n} className="h-[36px] flex items-center">
                  <div className="w-[24px] ml-[9px] flex justify-center">
                    <svg viewBox="0 0 12 16" width="12" height="16" className="block"><path d="M2 1.500L9 8L2 14.500" fill="none" stroke="#a6a6a6" strokeWidth="3.200" /></svg>
                  </div>
                  <div className="ml-[10px]"><TreeIcon i={t.i} /></div>
                  <span className="ml-[7px] whitespace-nowrap">{t.n}</span>
                </div>
              ))}
            </div>
          </div>
        </div>
      </div>

      {/* Status bar */}
      <div className="h-[44px] flex items-center shrink-0 tracking-[-0.3px] text-[20px]">
        <div className="ml-[4px] w-[386px] h-[30px] bg-white border border-[#8f8f8f] flex items-center pl-[8px] text-[#777] shrink-0 text-[22px]">
          <Search size={14} color="#999" />
          <span className="ml-[6px]">Type to locate (Ctrl+K)</span>
        </div>
        <span className="ml-[10px] flex-1">Ready</span>
        <span className="w-[105px] text-right pr-[2px] shrink-0">Coordinate</span>
        <Field w="w-[168px]"><span className="text-[20.5px]">-73.8816,40.7534</span></Field>
        <div className="ml-[3px] w-[30px] shrink-0">
          <svg viewBox="0 0 30 30" width="30" height="30" className="block"><ellipse cx="14" cy="15" rx="8.500" ry="13.500" transform="rotate(-25 14 15)" fill="#fff" stroke="#222" strokeWidth="2.800" /><path d="M8 6L21 22M5 14L15 27M11 4L6 14" stroke="#222" strokeWidth="2.800" /><circle cx="11" cy="20" r="4" fill="#222" /><circle cx="15" cy="11" r="2.500" fill="#222" /><path d="M25 3L28 6M26 10H29" stroke="#444" /></svg>
        </div>
        <span className="ml-[15px] w-[52px] shrink-0">Scale</span>
        <Field w="w-[138px]" extra={<ChevronDown size={15} color="#555" className="mr-[6px]" />}>1:126345</Field>
        <div className="ml-[13px] w-[23px] shrink-0">
          <svg viewBox="0 0 23 30" width="23" height="30" className="block"><path d="M5 14V8C5 1 18 1 18 8V14" fill="none" stroke="#8c8c8c" strokeWidth="3" /><rect x="1" y="13" width="21" height="16" rx="2" fill="#7d7d7d" /></svg>
        </div>
        <span className="ml-[12px] w-[90px] shrink-0">Magnifier</span>
        <Field w="w-[108px]" extra={<Spin />}>100%</Field>
        <span className="ml-[9px] w-[86px] shrink-0">Rotation</span>
        <Field w="w-[105px]" extra={<Spin />}>0.0 °</Field>
        <div className="ml-[7px] w-[25px] h-[30px] border-2 border-[#333] bg-white flex items-center justify-center shrink-0"><Check size={20} strokeWidth={1.2} color="#333" /></div>
        <span className="ml-[12px] w-[68px] shrink-0">Render</span>
        <div className="ml-[17px] w-[20px] shrink-0">
          <svg viewBox="0 0 20 24" width="20" height="24" className="block"><circle cx="10" cy="9" r="8.500" fill="#fff" stroke="#777" strokeWidth="1.500" /><path d="M1 9H19M10 1V17M4 3C7 7 7 12 4 15M16 3C13 7 13 12 16 15M3 5H17M3 13H17" stroke="#777" /><path d="M7 20H13M10 17V23" stroke="#777" strokeWidth="2" /></svg>
        </div>
        <span className="ml-[11px] w-[100px] shrink-0 whitespace-nowrap">EPSG:4269</span>
        <div className="ml-[32px] w-[25px] mr-[11px] shrink-0">
          <svg viewBox="0 0 25 30" width="25" height="30" className="block"><path d="M12.500 1C20 1 25 6 25 13C25 20 20 25 14 25L16 30L8 24C3 22 0 18 0 13C0 6 5 1 12.500 1Z" fill="#7d7d7d" /><circle cx="7" cy="13" r="1.800" fill="#fff" /><circle cx="12.500" cy="13" r="1.800" fill="#fff" /><circle cx="18" cy="13" r="1.800" fill="#fff" /></svg>
        </div>
      </div>
    </div>
  );
}
